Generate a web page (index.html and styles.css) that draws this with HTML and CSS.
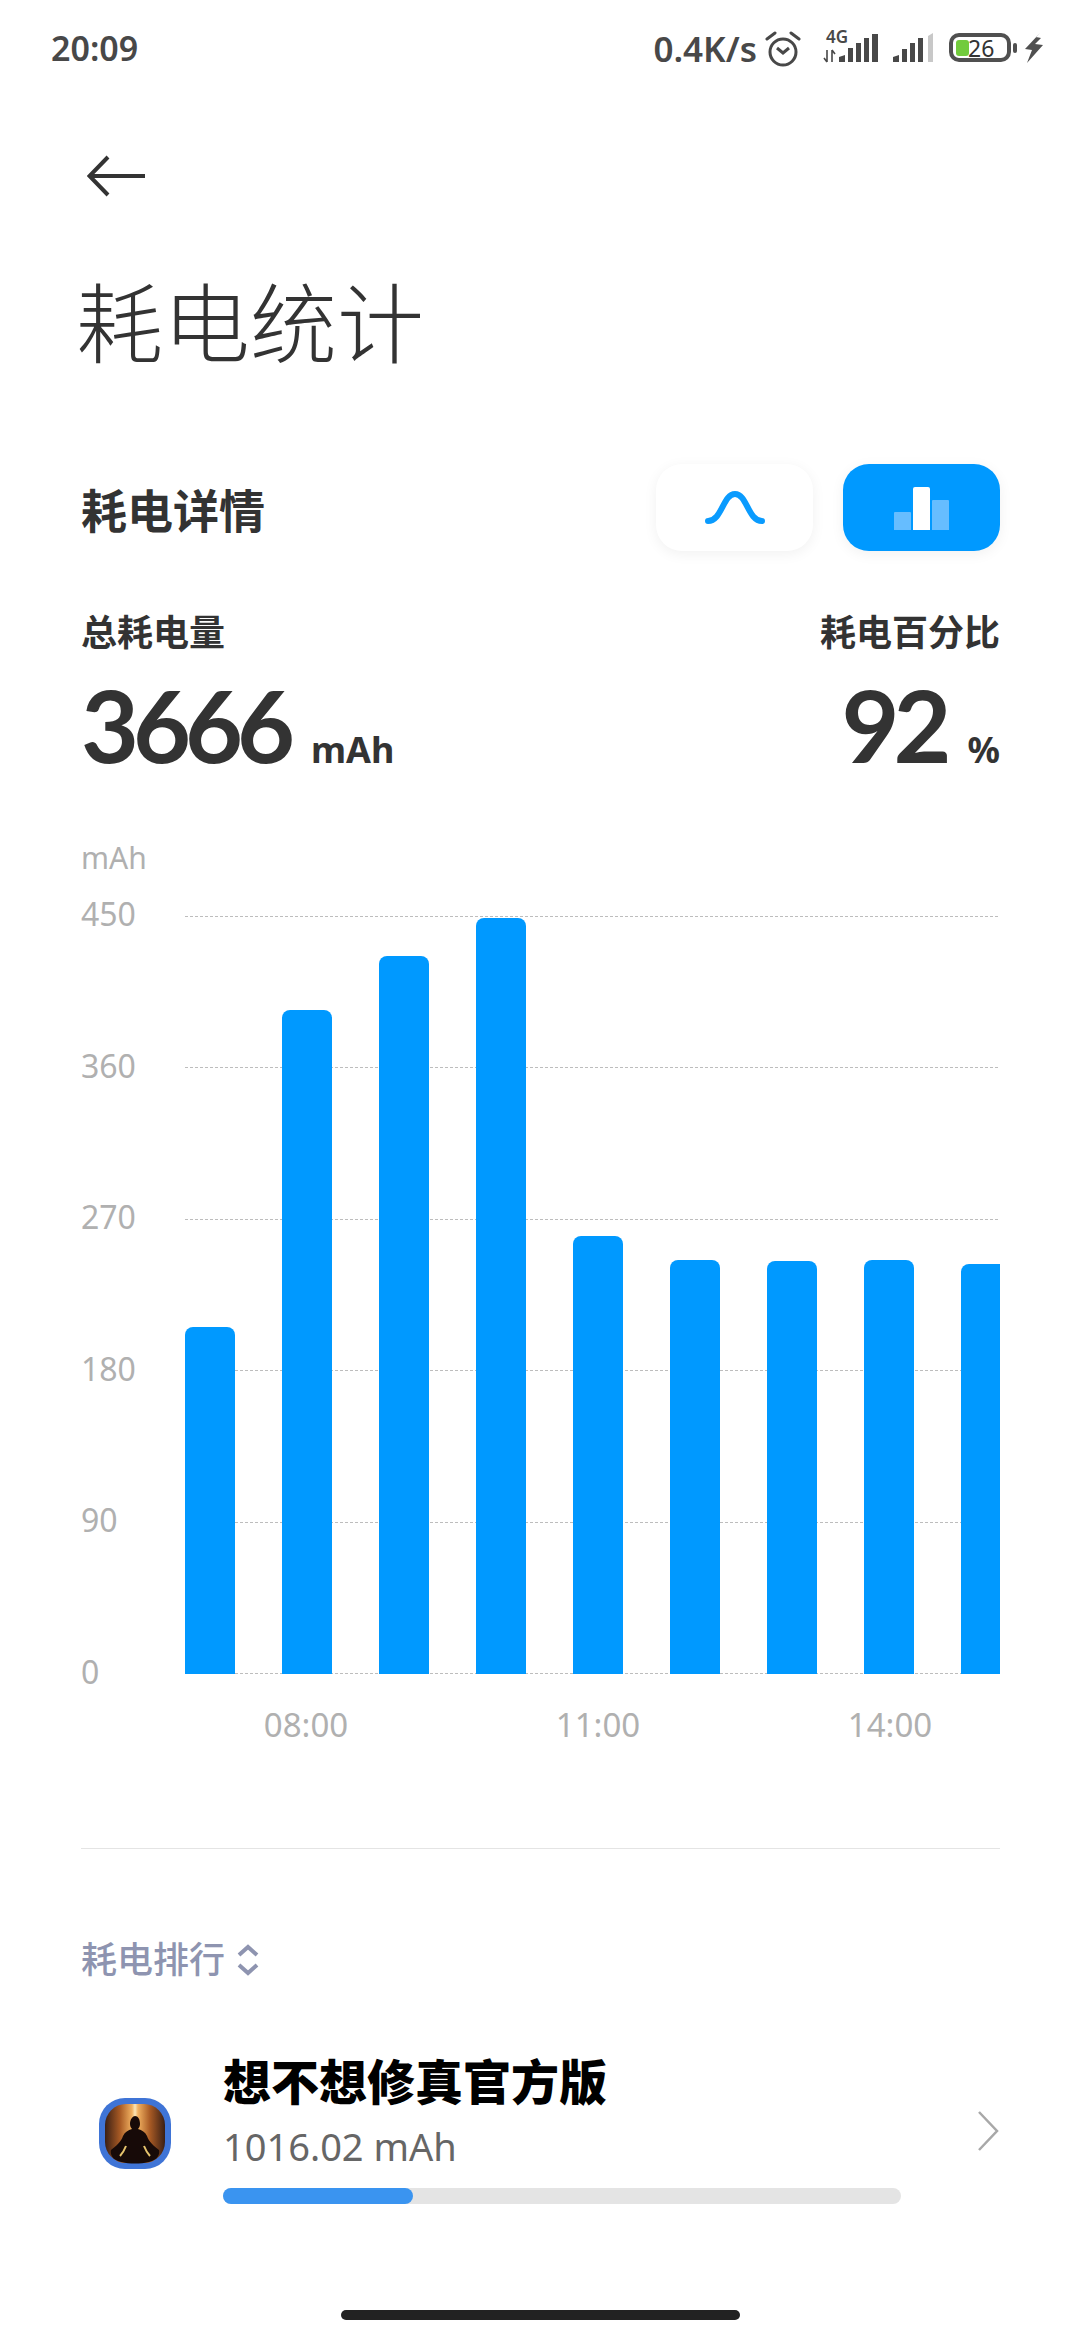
FILE: index.html
```html
<!DOCTYPE html>
<html lang="zh">
<head>
    <meta charset="UTF-8">
    <title>耗电统计</title>
    <link rel="stylesheet" href="styles.css">
</head>
<body>
    <div class="page">

        <div class="statusbar">
            <span class="time">20:09</span>
            <span class="speed">0.4K/s</span>
            <svg class="alarm" width="36" height="40" viewBox="0 0 36 40">
                <circle cx="18" cy="24" r="13" fill="none" stroke="#484848" stroke-width="3"/>
                <path d="M12 20l6 5 6-5" fill="none" stroke="#484848" stroke-width="3"/>
                <path d="M2 11l8-6M34 11l-8-6" fill="none" stroke="#484848" stroke-width="3" stroke-linecap="round"/>
            </svg>
            <svg class="signal" width="58" height="48" viewBox="0 -4 58 48">
                <text x="4" y="15" class="net">4G</text>
                <path d="M5 22v12M2 30l3 4M10 34V22M10 22l3 4" fill="none" stroke="#484848" stroke-width="1.600"/>
                <path d="M17 34v-5l6-2v7zM26 34V20h5v14zM34 34V15h5v19zM42 34V10h5v24zM50 34V6h6v28z" fill="#484848"/>
            </svg>
            <svg class="signal2" width="40" height="40" viewBox="0 0 40 40">
                <path d="M0 34v-5l6-2v7zM9 34V21h5v13zM17 34V15h5v19zM25 34V10h5v24z" fill="#484848"/>
                <path d="M35 34V8l5-3v29z" fill="#c8c8c8"/>
            </svg>
            <svg class="battery" width="94" height="40" viewBox="0 0 94 40">
                <rect x="2" y="7" width="58" height="25" rx="8" fill="none" stroke="#505050" stroke-width="4"/>
                <rect x="7" y="12" width="13" height="16" rx="3" fill="#72cb3c"/>
                <text x="19" y="29" class="level">26</text>
                <rect x="64" y="15" width="4" height="10" rx="2" fill="#505050"/>
                <path d="M91 5L76 21l7 1-5 13 16-18-8-1 6-6-5-1z" fill="#505050"/>
            </svg>
        </div>

        <div class="topbar">
            <svg width="60" height="44" viewBox="0 0 60 44">
                <path d="M58 22H3M21 3L2.500 22 21 41" fill="none" stroke="#333" stroke-width="4"/>
            </svg>
        </div>

        <h1 class="title">耗电统计</h1>

        <div class="detail-head">
            <h2>耗电详情</h2>
            <div class="switch">
                <div class="switch-btn">
                    <svg width="157" height="87" viewBox="0 0 157 87">
                        <path d="M52 57c14 0 15-27 27-27s13 27 27 27" fill="none" stroke="#0a9bfe" stroke-width="6" stroke-linecap="round"/>
                    </svg>
                </div>
                <div class="switch-btn active">
                    <svg width="157" height="87" viewBox="0 0 157 87">
                        <path d="M51 49q0-1 1-1h15q1 0 1 1v17H51zM89 37q0-1 1-1h15q1 0 1 1v29H89z" fill="#66bdff"/>
                        <path d="M70 25q0-2 2-2h13q2 0 2 2v41H70z" fill="#fff"/>
                    </svg>
                </div>
            </div>
        </div>

        <div class="totals">
            <div class="total">
                <div class="total-label">总耗电量</div>
                <div class="total-value">3666<span class="unit">mAh</span></div>
            </div>
            <div class="total right">
                <div class="total-label">耗电百分比</div>
                <div class="total-value">92<span class="unit">%</span></div>
            </div>
        </div>

        <div class="chart-unit">mAh</div>
        <div class="chart">
            <div class="y-axis">
                <span>450</span>
                <span>360</span>
                <span>270</span>
                <span>180</span>
                <span>90</span>
                <span>0</span>
            </div>
            <div class="plot">
                <div class="grid-lines">
                    <i></i><i></i><i></i><i></i><i></i><i></i>
                </div>
                <div class="bars">
                    <div class="bar" style="height:347px"></div>
                    <div class="bar" style="height:664px"></div>
                    <div class="bar" style="height:718px"></div>
                    <div class="bar" style="height:756px"></div>
                    <div class="bar" style="height:438px"></div>
                    <div class="bar" style="height:414px"></div>
                    <div class="bar" style="height:413px"></div>
                    <div class="bar" style="height:414px"></div>
                    <div class="bar" style="height:410px"></div>
                </div>
            </div>
        </div>
        <div class="x-axis">
            <span>08:00</span>
            <span>11:00</span>
            <span>14:00</span>
        </div>

        <div class="divider"></div>

        <div class="rank-head">
            <span>耗电排行</span>
            <svg width="24" height="32" viewBox="0 0 24 32">
                <path d="M3 11l9-8 9 8M3 21l9 8 9-8" fill="none" stroke="#8e94b0" stroke-width="4"/>
            </svg>
        </div>

        <div class="app-row">
            <svg class="app-icon" width="72" height="72" viewBox="0 0 72 72">
                <defs>
                    <linearGradient id="beam" x1="0" y1="0" x2="1" y2="0">
                        <stop offset="0" stop-color="#3a1f14"/>
                        <stop offset="0.25" stop-color="#a85a24"/>
                        <stop offset="0.45" stop-color="#f0b060"/>
                        <stop offset="0.5" stop-color="#fbe6b8"/>
                        <stop offset="0.55" stop-color="#f0b060"/>
                        <stop offset="0.75" stop-color="#a85a24"/>
                        <stop offset="1" stop-color="#3a1f14"/>
                    </linearGradient>
                </defs>
                <rect x="0" y="0" width="72" height="71" rx="26" fill="#3f74d6"/>
                <rect x="6" y="6" width="60" height="59" rx="21" fill="url(#beam)"/>
                <path d="M36 18c3 0 5 3 5 8 0 2-1 4-2 5 4 1 7 3 9 7 2 6 7 10 12 14 1 4-1 10-10 12-9 2-19 2-28 0-9-2-11-8-10-12 5-4 10-8 12-14 2-4 5-6 9-7-1-1-2-3-2-5 0-5 3-8 5-8z" fill="#170a08"/>
                <path d="M27 48c-2 5-4 8-6 10M45 48c2 5 4 8 6 10" fill="none" stroke="#e7c56e" stroke-width="2"/>
            </svg>
            <div class="app-info">
                <div class="app-name">想不想修真官方版</div>
                <div class="app-usage">1016.02 mAh</div>
                <div class="progress"><div class="progress-fill" style="width:28%"></div></div>
            </div>
            <svg class="app-arrow" width="24" height="42" viewBox="0 0 24 42">
                <path d="M3 2l18 19L3 40" fill="none" stroke="#a8a8a8" stroke-width="2.500"/>
            </svg>
        </div>

        <div class="home-bar"></div>
    </div>
</body>
</html>
```

FILE: styles.css
```css
html, body {
    margin: 0;
    padding: 0;
    background-color: #fff;
}
.page {
    width: 1080px;
    height: 2340px;
    overflow: hidden;
    font-family: "Noto Sans", "Noto Sans CJK SC", sans-serif;
    color: #333;
    display: flex;
    flex-direction: column;
}
h1, h2 {
    margin: 0;
}

/* status bar */
.statusbar {
    height: 40px;
    margin-top: 28px;
    padding: 0 37px 0 51px;
    display: flex;
    align-items: center;
    color: #484848;
}
.time {
    font-size: 34px;
    font-weight: 600;
    flex: 1;
}
.speed {
    font-size: 35px;
    font-weight: 600;
}
.alarm {
    margin-left: 8px;
}
.signal {
    margin-left: 21px;
}
.signal2 {
    margin-left: 13px;
}
.battery {
    margin-left: 16px;
}
.net {
    font-size: 17px;
    font-weight: 600;
    fill: #484848;
}
.level {
    font-size: 23px;
    fill: #333;
}

/* header */
.topbar {
    margin-top: 86px;
    padding-left: 87px;
    height: 44px;
}
.title {
    margin-top: 65px;
    padding-left: 76px;
    font-size: 87px;
    font-weight: 300;
    line-height: 120px;
    color: #333;
}

/* detail head */
.detail-head {
    margin-top: 81px;
    padding: 0 80px 0 81px;
    display: flex;
    justify-content: space-between;
    align-items: center;
}
.detail-head h2 {
    font-size: 46px;
    font-weight: 700;
    color: #333;
}
.switch {
    display: flex;
    gap: 30px;
}
.switch-btn {
    width: 157px;
    height: 87px;
    border-radius: 26px;
    background-color: #fff;
    box-shadow: 0 3px 14px rgba(0, 0, 0, 0.06);
}
.switch-btn.active {
    background-color: #0099ff;
}
.switch-btn svg {
    display: block;
}

/* totals */
.totals {
    margin-top: 58px;
    padding: 0 80px 0 81px;
    display: flex;
    justify-content: space-between;
}
.total.right {
    text-align: right;
}
.total-label {
    font-size: 36px;
    font-weight: 700;
    line-height: 48px;
    color: #333;
}
.total-value {
    font-family: Lato, "Noto Sans", sans-serif;
    font-size: 100px;
    font-weight: 700;
    letter-spacing: -6px;
    line-height: 124px;
    margin-top: 5px;
    color: #333;
}
.unit {
    font-family: "Noto Sans", sans-serif;
    font-size: 36px;
    font-weight: 700;
    letter-spacing: 0;
    margin-left: 22px;
}

/* chart */
.chart-unit {
    margin-top: 26px;
    padding-left: 81px;
    font-size: 30px;
    line-height: 40px;
    color: #b0b0b0;
}
.chart {
    margin-top: 38px;
    padding-left: 81px;
    display: flex;
}
.y-axis {
    width: 104px;
    height: 794px;
    display: flex;
    flex-direction: column;
    justify-content: space-between;
    font-size: 32px;
    line-height: 36px;
    color: #b0b0b0;
    margin-top: -20px;
    margin-bottom: -16px;
}
.plot {
    width: 815px;
    height: 758px;
    display: grid;
    overflow: hidden;
}
.grid-lines, .bars {
    grid-area: 1 / 1;
}
.grid-lines {
    display: flex;
    flex-direction: column;
    justify-content: space-between;
}
.grid-lines i {
    display: block;
    height: 1px;
    background-image: repeating-linear-gradient(90deg, #bdbdbd 0, #bdbdbd 3px, transparent 3px, transparent 5px);
}
.bars {
    display: flex;
    align-items: flex-end;
    gap: 47px;
}
.bar {
    flex: 0 0 50px;
    background-color: #0099ff;
    border-radius: 8px 8px 0 0;
}
.x-axis {
    margin-top: 31px;
    padding-left: 306px;
    display: flex;
    font-size: 33px;
    line-height: 40px;
    color: #b0b0b0;
}
.x-axis span {
    width: 0;
    display: flex;
    justify-content: center;
    margin-right: 292px;
}

.divider {
    margin: 103px 80px 0 81px;
    height: 1px;
    background-color: #e4e4e4;
}

/* ranking */
.rank-head {
    margin-top: 88px;
    padding-left: 81px;
    display: flex;
    align-items: center;
    gap: 11px;
    font-size: 36px;
    font-weight: 500;
    line-height: 46px;
    color: #8e94b0;
}
.app-row {
    margin-top: 67px;
    padding-left: 99px;
    display: flex;
    align-items: center;
}
.app-icon {
    flex: none;
    margin-top: 14px;
}
.app-info {
    margin-left: 52px;
    width: 678px;
}
.app-name {
    font-size: 48px;
    font-weight: 900;
    line-height: 64px;
    color: #000;
}
.app-usage {
    font-size: 38px;
    line-height: 52px;
    margin-top: 6px;
    color: #666;
}
.progress {
    margin-top: 16px;
    height: 16px;
    border-radius: 8px;
    background-color: #e4e4e4;
}
.progress-fill {
    height: 100%;
    border-radius: 8px;
    background-color: #3a94f0;
}
.app-arrow {
    margin-left: 75px;
    margin-top: 8px;
}
.home-bar {
    margin: 106px auto 0;
    width: 399px;
    height: 10px;
    border-radius: 5px;
    background-color: #222;
}
```
